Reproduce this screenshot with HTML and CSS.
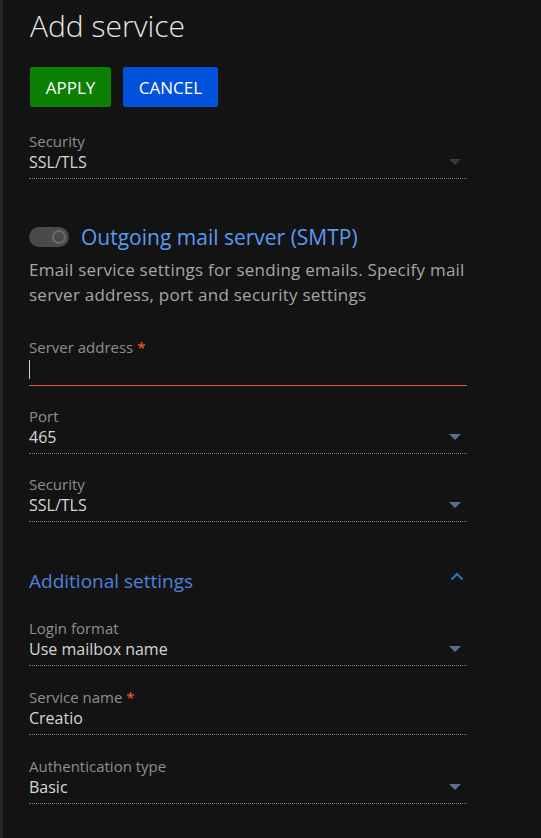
FILE: index.html
```html
<!DOCTYPE html>
<html lang="en">
<head>
<meta charset="utf-8">
<title>Add service</title>
<link rel="stylesheet" href="styles.css">
</head>
<body>
<div class="page">
  <h1 class="title">Add service</h1>
  <div class="actions">
    <button class="btn btn-apply">APPLY</button>
    <button class="btn btn-cancel">CANCEL</button>
  </div>

  <div class="field field-first">
    <div class="field-label">Security</div>
    <div class="field-value">
      <span>SSL/TLS</span>
      <svg class="caret caret-disabled" width="12" height="7" viewBox="0 0 12 7"><path d="M0 0h12L6 6z"/></svg>
    </div>
  </div>

  <div class="section-head">
    <span class="toggle"><span class="knob"></span></span>
    <span class="section-title">Outgoing mail server (SMTP)</span>
  </div>
  <p class="section-desc">Email service settings for sending emails. Specify mail server address, port and security settings</p>

  <div class="field field-text">
    <div class="field-label">Server address <span class="req">*</span></div>
    <div class="field-input"><span class="cursor"></span></div>
  </div>

  <div class="field">
    <div class="field-label">Port</div>
    <div class="field-value">
      <span>465</span>
      <svg class="caret" width="12" height="7" viewBox="0 0 12 7"><path d="M0 0h12L6 6z"/></svg>
    </div>
  </div>

  <div class="field">
    <div class="field-label">Security</div>
    <div class="field-value">
      <span>SSL/TLS</span>
      <svg class="caret" width="12" height="7" viewBox="0 0 12 7"><path d="M0 0h12L6 6z"/></svg>
    </div>
  </div>

  <div class="group-head">
    <span class="group-title">Additional settings</span>
    <svg class="chevron" width="14" height="9" viewBox="0 0 14 9"><path d="M1.5 7.5L7 2l5.5 5.5" fill="none" stroke="currentColor" stroke-width="2"/></svg>
  </div>

  <div class="group">
    <div class="field">
      <div class="field-label">Login format</div>
      <div class="field-value">
        <span>Use mailbox name</span>
        <svg class="caret" width="12" height="7" viewBox="0 0 12 7"><path d="M0 0h12L6 6z"/></svg>
      </div>
    </div>

    <div class="field">
      <div class="field-label">Service name <span class="req">*</span></div>
      <div class="field-value">
        <span>Creatio</span>
      </div>
    </div>

    <div class="field">
      <div class="field-label">Authentication type</div>
      <div class="field-value">
        <span>Basic</span>
        <svg class="caret" width="12" height="7" viewBox="0 0 12 7"><path d="M0 0h12L6 6z"/></svg>
      </div>
    </div>
  </div>
</div>
</body>
</html>
```

FILE: styles.css
```css
html, body {
  margin: 0;
  height: 100%;
  background: #131313;
}

body {
  font-family: "Open Sans", "Noto Sans", sans-serif;
  color: #d4d4d4;
}

.page {
  box-sizing: border-box;
  min-height: 100%;
  border-left: 3px solid #262626;
  padding: 0 0 0 26px;
  width: 467px;
}

.title {
  margin: 0;
  padding: 5px 0 0 1px;
  font-size: 30px;
  font-weight: 300;
  line-height: 42px;
  color: #e6e6e6;
}

.actions {
  display: flex;
  gap: 12px;
  margin-top: 20px;
  padding-left: 1px;
}

.btn {
  height: 40px;
  border: 0;
  border-radius: 2px;
  padding: 0;
  font-family: inherit;
  font-size: 17px;
  color: #fff;
}

.btn-apply {
  width: 81px;
  background: #0c8003;
}

.btn-cancel {
  width: 95px;
  background: #0052da;
}

.field {
  margin-top: 20px;
}

.field-first {
  margin-top: 24px;
}

.field-label {
  font-size: 15px;
  line-height: 20px;
  color: #8e8e8e;
}

.req {
  color: #e3552a;
  font-weight: 600;
}

.field-value {
  display: flex;
  justify-content: space-between;
  align-items: center;
  font-size: 16px;
  line-height: 22px;
  color: #d6d6d6;
  padding-bottom: 5px;
  border-bottom: 1px dotted #7c7c7c;
}

.caret {
  margin-right: 6px;
  fill: #5c6f8f;
}

.caret-disabled {
  fill: #3a3a3a;
}

.section-head {
  display: flex;
  align-items: center;
  gap: 12px;
  margin-top: 44px;
}

.toggle {
  position: relative;
  box-sizing: border-box;
  width: 40px;
  height: 20px;
  border-radius: 10px;
  background: #4a4a4a;
}

.knob {
  position: absolute;
  right: 3px;
  top: 3px;
  box-sizing: border-box;
  width: 14px;
  height: 14px;
  border-radius: 50%;
  border: 2px solid #6a6a6a;
  background: #4a4a4a;
}

.section-title {
  font-size: 21px;
  line-height: 28px;
  color: #5a9af2;
}

.section-desc {
  margin: 6px 0 0;
  font-size: 17px;
  letter-spacing: 0.25px;
  line-height: 25px;
  color: #a6a6a6;
}

.field-text {
  margin-top: 30px;
}

.field-input {
  box-sizing: border-box;
  height: 29px;
  padding-top: 3px;
  border-bottom: 1px solid #e05555;
}

.cursor {
  display: block;
  width: 1px;
  height: 19px;
  background: #d0d0d0;
}

.group-head {
  display: flex;
  justify-content: space-between;
  align-items: center;
  margin-top: 46px;
}

.group-title {
  font-size: 19px;
  line-height: 26px;
  color: #4c82de;
}

.chevron {
  color: #1a7cc6;
  margin-right: 3px;
  margin-top: -10px;
}

.group .field {
  margin-top: 21px;
}

.group .field:first-child {
  margin-top: 24px;
}
```
